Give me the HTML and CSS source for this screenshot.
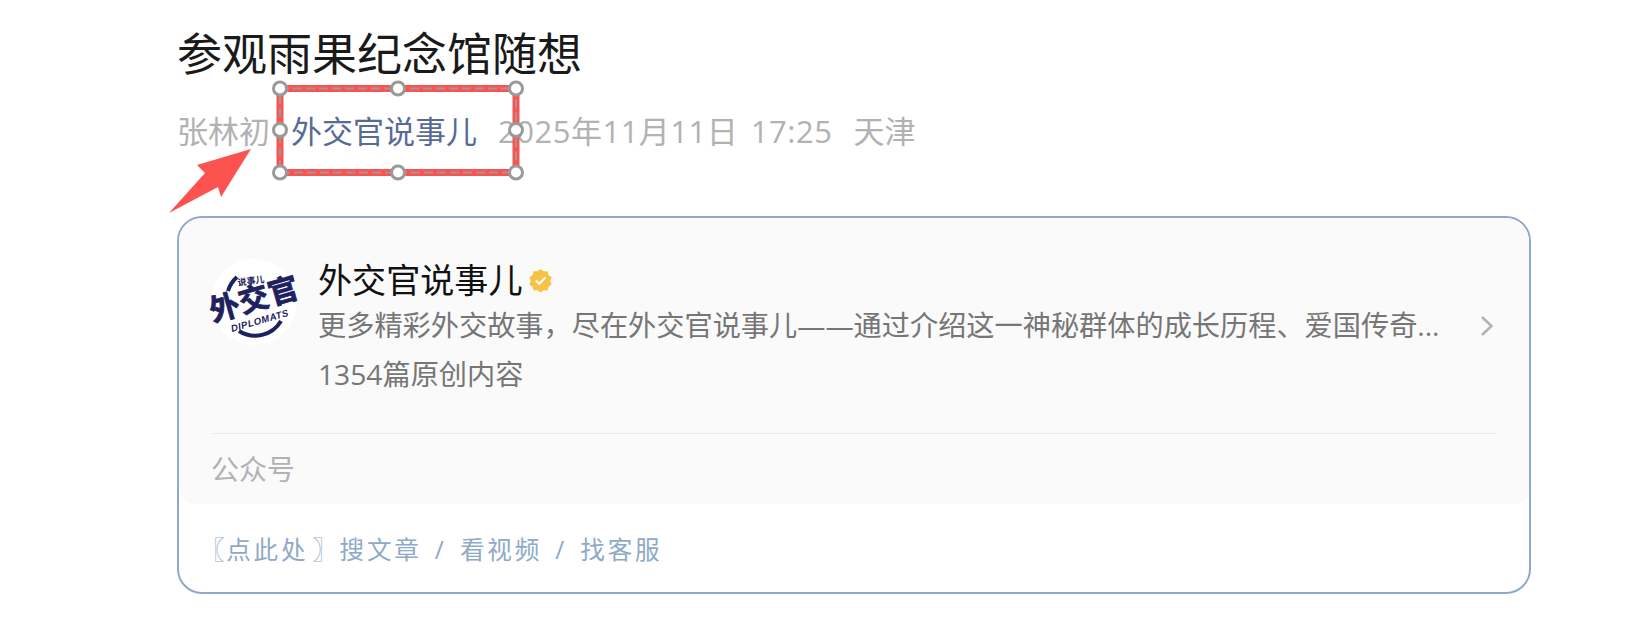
FILE: index.html
```html
<!DOCTYPE html>
<html lang="zh-CN">
<head>
<meta charset="utf-8">
<title>参观雨果纪念馆随想</title>
<link rel="stylesheet" href="styles.css">
</head>
<body>
<article class="page">
	<h1 class="title">参观雨果纪念馆随想</h1>
	<div class="meta">
		<span class="author">张林初</span>
		<a class="account">外交官说事儿</a>
		<span class="date">2025年11月11日 17:25</span>
		<span class="place">天津</span>
	</div>

	<section class="card">
		<div class="card_top">
			<div class="profile">
				<svg class="logo" viewBox="0 0 86 86">
					<circle cx="43" cy="43" r="43" fill="#fff"/>
					<path class="logo_arc" d="M17 32 A30 30 0 0 1 26 18"/>
					<path class="logo_arc" d="M28 72 A30 30 0 0 0 70 62"/>
					<text class="logo_small" x="27" y="27" transform="rotate(-8 27 27)">说事儿</text>
					<text class="logo_big" x="2" y="63" transform="rotate(-16 2 63)">外交官</text>
					<text class="logo_latin" x="21" y="73" transform="rotate(-16 21 73)">DIPLOMATS</text>
				</svg>
				<div class="info">
					<div class="name">外交官说事儿<svg class="verified" viewBox="0 0 24 24"><path d="M12 1l3 2.2 3.7-.2 1 3.6 3 2.2-1.300 3.500 1.300 3.500-3 2.200-1 3.600-3.700-.2-3 2.200-3-2.200-3.700.2-1-3.600-3-2.200 1.300-3.500-1.300-3.500 3-2.200 1-3.600 3.700.2z" fill="#f6c345"/><path d="M7.500 12l3.200 3.200 6-6" fill="none" stroke="#fff" stroke-width="2"/></svg></div>
					<div class="desc">更多精彩外交故事，尽在外交官说事儿——通过介绍这一神秘群体的成长历程、爱国传奇...</div>
					<div class="count">1354篇原创内容</div>
				</div>
				<svg class="chevron" viewBox="0 0 12 20"><path d="M1 1l9.500 9-9.500 9" fill="none" stroke="#b2b2b2" stroke-width="2.500"/></svg>
			</div>
			<div class="kind">公众号</div>
		</div>
		<div class="links"><span class="open">〖</span>点此处<span class="close">〗</span>搜文章 / 看视频 / 找客服</div>
	</section>
</article>

<svg class="markup" viewBox="0 0 1652 620">
	<rect x="280" y="88.500" width="236" height="84" fill="none" stroke="#fd5350" stroke-width="7"/>
	<rect x="280" y="88.500" width="236" height="84" fill="none" stroke="#9a9a9a" stroke-width="2" stroke-dasharray="9 4"/>
	<circle class="handle" cx="280" cy="88.500" r="6.500"/>
	<circle class="handle" cx="398" cy="88.500" r="6.500"/>
	<circle class="handle" cx="516" cy="88.500" r="6.500"/>
	<circle class="handle" cx="280" cy="130" r="6.500"/>
	<circle class="handle" cx="516" cy="130" r="6.500"/>
	<circle class="handle" cx="280" cy="172.500" r="6.500"/>
	<circle class="handle" cx="398" cy="172.500" r="6.500"/>
	<circle class="handle" cx="516" cy="172.500" r="6.500"/>
	<path d="M251 149 L197 165 L205 173 L169 213 L218 187 L221 197 Z" fill="#fd5350"/>
</svg>
</body>
</html>
```

FILE: styles.css
```css
html, body { margin:0; padding:0; background:#ffffff; }
body { font-family:"Open Sans", "Noto Sans CJK SC", sans-serif; height:620px; overflow:hidden; position:relative; }

.page { width:1354px; margin-left:177px; padding-top:23px; }
.title { margin:0; font-size:45px; line-height:62px; font-weight:400; color:#1a1a1a; }

.meta { display:flex; gap:21px; margin-top:16px; font-size:31px; line-height:60px; color:#b2b2b2; }
.account { color:#576b95; }
.date { letter-spacing:.5px; word-spacing:4px; }

.card { margin-top:55px; height:378px; border:2px solid #8eaac8; border-radius:25px; box-sizing:border-box; }
.card_top { height:286px; background:#fafafa; border-radius:23px 23px 16px 16px; padding:0 32px; box-sizing:border-box; }

.profile { display:flex; align-items:flex-start; height:216px; border-bottom:1px solid #ececec; padding-top:40px; box-sizing:border-box; }
.logo { width:86px; height:86px; flex:none; margin:1px 21px 0 0; overflow:visible; }
.logo_arc { fill:none; stroke:#1d2160; stroke-width:4; }
.logo_small { font-size:9px; font-weight:700; fill:#1d2160; }
.logo_big { font-size:30px; font-weight:700; letter-spacing:.5px; fill:#1d2160; stroke:#1d2160; stroke-width:.8px; }
.logo_latin { font-size:9.500px; font-weight:700; font-style:italic; fill:#1d2160; font-family:"Liberation Sans", sans-serif; letter-spacing:.5px; }

.info { flex:1; min-width:0; }
.name { font-size:34.100px; line-height:44px; color:#111111; display:flex; align-items:center; }
.verified { width:25px; height:25px; margin-left:6px; }
.desc { font-size:28.200px; line-height:44px; color:#767676; white-space:nowrap; margin-top:1px; }
.count { font-size:28.200px; line-height:44px; color:#767676; margin-top:5px; }
.chevron { width:12px; height:20px; flex:none; margin:58px 4px 0 0; }

.kind { font-size:28px; line-height:70px; color:#b2b2b2; }

.links { padding:28px 21px 0; font-size:24.600px; line-height:36px; letter-spacing:2.800px; word-spacing:4px; color:#8eaac8; white-space:nowrap; }
.open { letter-spacing:1.600px; }
.close { margin-left:4px; letter-spacing:2.500px; }

.markup { position:absolute; left:0; top:0; width:1652px; height:620px; }
.handle { fill:#ffffff; stroke:#9a9a9a; stroke-width:3; }
```
